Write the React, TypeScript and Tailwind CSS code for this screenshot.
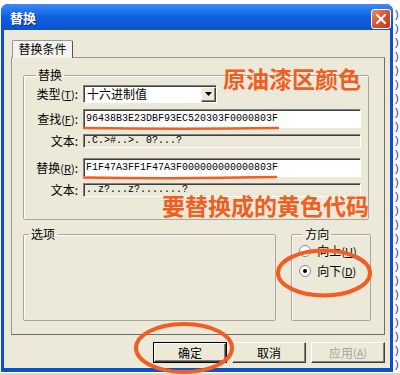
import React from 'react';

const cjk = "font-['Noto_Sans_CJK_SC','Noto_Sans',sans-serif]";
const mono = "font-['Liberation_Mono',monospace]";
const sunken =
  'border border-t-[#808080] border-l-[#808080] border-r-white border-b-white shadow-[inset_1px_1px_0_#404040]';
const raised =
  'border border-t-white border-l-white border-r-[#404040] border-b-[#404040] shadow-[inset_-1px_-1px_0_#808080]';

function Row({ label, children, className = '' }: { label: React.ReactNode; children: React.ReactNode; className?: string }) {
  return (
    <div className={`flex items-center ${className}`}>
      <div className="w-[52px] pr-[5px] flex justify-end text-[12px] leading-[14px] whitespace-nowrap">{label}</div>
      <div className="flex-1">{children}</div>
    </div>
  );
}

function Hot({ k }: { k: string }) {
  return (
    <span className="text-[11px]">
      (<span className="underline">{k}</span>)
    </span>
  );
}

function Radio({ checked, label, k }: { checked?: boolean; label: string; k: string }) {
  return (
    <div className="flex items-center gap-[6px]">
      <div className="w-[12px] h-[12px] rounded-full border border-[#8a8a8a] bg-white flex items-center justify-center">
        {checked && <div className="w-[4px] h-[4px] rounded-full bg-black" />}
      </div>
      <span className="text-[12px] leading-[14px]">
        {label}
        <Hot k={k} />
      </span>
    </div>
  );
}

export default function App() {
  return (
    <div className={`relative w-[400px] h-[375px] overflow-hidden bg-white text-black ${cjk}`}>
      {/* hex editor behind the dialog */}
      <div className="h-[4px] overflow-hidden">
        <div className={`-mt-[9px] ml-[2px] text-[11px] leading-[13px] whitespace-pre text-[#111] ${mono}`}>
          0000 0000 0000 0DBF 12BF 0000 0000 0018 0DBD 2DBD
        </div>
      </div>

      <div className="flex h-[368px]">
        {/* dialog */}
        <div className="ml-[1px] w-[392px] flex flex-col rounded-t-[7px] bg-[#0b4fd1]">
          <div className="h-[26px] flex items-center justify-between pl-[9px] pr-[2px] rounded-t-[7px] bg-gradient-to-b from-[#3b8cf5] via-[#0d5fe0] to-[#0a52d0]">
            <span className="text-white font-bold text-[13px] leading-none [text-shadow:1px_1px_0_#0a2a80]">替换</span>
            <div className="mt-[3px] w-[20px] h-[20px] rounded-[3px] border border-white bg-gradient-to-br from-[#e98a68] via-[#d9512a] to-[#c43d16] flex items-center justify-center">
              <svg width="12" height="12" viewBox="0 0 12 12">
                <path d="M2 2 L10 10 M10 2 L2 10" stroke="white" strokeWidth="2.2" strokeLinecap="round" />
              </svg>
            </div>
          </div>

          <div className="flex-1 mx-[3px] mb-[4px] bg-[#ece9d8] flex flex-col pt-[10px] pb-[5px]">
            {/* tab header */}
            <div className="h-[17px] flex">
              <div className="ml-[8px] w-[61px] h-[18px] border border-b-0 border-[#919b9c] border-r-[#55554f] bg-[#f4f3ee] rounded-t-[2px] text-[12px] leading-[16px] text-center z-10">
                替换条件
              </div>
            </div>
            {/* tab panel */}
            <div className="ml-[7px] mr-[5px] h-[278px] border border-[#919b9c] border-r-[#6f6e68] border-b-[#6f6e68] bg-[#ece9d8] pl-[11px] pr-[13px] pt-[10px]">
              <fieldset className="mr-[2px] border border-[#aca899] rounded-[2px] pl-[7px] pr-[7px] pb-[22px] shadow-[inset_1px_1px_0_white]">
                <legend className="ml-[5px] px-[2px] text-[12px] leading-[14px]">替换</legend>
                <Row label={<>类型<Hot k="T" />:</>} className="mt-[3px]">
                  <div className={`w-[134px] h-[18px] bg-white flex items-center justify-between ${sunken}`}>
                    <span className="pl-[3px] text-[12px] leading-[14px]">十六进制值</span>
                    <div className={`w-[15px] h-[15px] bg-[#ece9d8] flex items-center justify-center ${raised}`}>
                      <svg width="7" height="4" viewBox="0 0 7 4">
                        <path d="M0 0 H7 L3.5 4 Z" fill="black" />
                      </svg>
                    </div>
                  </div>
                </Row>
                <Row label={<>查找<Hot k="F" />:</>} className="mt-[6px]">
                  <div className={`h-[19px] bg-white flex items-center ${sunken}`}>
                    <span className={`pl-[2px] text-[10px] leading-none ${mono}`}>96438B3E23DBF93EC520303F0000803F</span>
                  </div>
                </Row>
                <Row label="文本:" className="mt-[6px]">
                  <div className={`h-[14px] bg-[#ece9d8] flex items-center ${sunken}`}>
                    <span className={`pl-[2px] text-[10px] leading-none whitespace-pre ${mono}`}>.C.&gt;#..&gt;. 0?...?</span>
                  </div>
                </Row>
                <Row label={<>替换<Hot k="R" />:</>} className="mt-[10px]">
                  <div className={`h-[19px] bg-white flex items-center ${sunken}`}>
                    <span className={`pl-[2px] text-[10px] leading-none ${mono}`}>F1F47A3FF1F47A3F000000000000803F</span>
                  </div>
                </Row>
                <Row label="文本:" className="mt-[6px]">
                  <div className={`h-[14px] bg-[#ece9d8] flex items-center ${sunken}`}>
                    <span className={`pl-[2px] text-[10px] leading-none whitespace-pre ${mono}`}>..z?...z?.......?</span>
                  </div>
                </Row>
              </fieldset>

              <div className="mt-[7px] flex gap-[15px]">
                <fieldset className="w-[254px] h-[94px] border border-[#aca899] rounded-[2px] shadow-[inset_1px_1px_0_white]">
                  <legend className="ml-[5px] px-[2px] text-[12px] leading-[14px]">选项</legend>
                </fieldset>
                <fieldset className="w-[80px] h-[94px] border border-[#aca899] rounded-[2px] shadow-[inset_1px_1px_0_white] pl-[7px] pt-[3px] flex flex-col gap-[6px]">
                  <legend className="ml-[4px] px-[2px] text-[12px] leading-[14px]">方向</legend>
                  <Radio label="向上" k="U" />
                  <Radio label="向下" k="D" checked />
                </fieldset>
              </div>
            </div>

            {/* buttons */}
            <div className="mt-[7px] mr-[5px] flex justify-end gap-[5px]">
              <div className="w-[74px] h-[21px] border border-black bg-[#ece9d8]">
                <div className={`h-full flex items-center justify-center text-[12px] ${raised}`}>确定</div>
              </div>
              <div className={`w-[74px] h-[21px] bg-[#ece9d8] flex items-center justify-center text-[12px] ${raised}`}>取消</div>
              <div className={`w-[74px] h-[21px] bg-[#ece9d8] flex items-center justify-center text-[12px] text-[#a7a69c] ${raised}`}>
                应用<Hot k="A" />
              </div>
            </div>
          </div>
        </div>

        {/* right edge of the window behind */}
        <div className={`flex-1 flex flex-col items-center pt-[4px] text-[11px] leading-[14px] text-[#1a3cbf] ${mono}`}>
          {Array.from({ length: 26 }).map((_, i) => (
            <span key={i}>)</span>
          ))}
        </div>
      </div>

      <div className="h-[3px] bg-[#dcd9cc] border-t border-white" />

      {/* orange annotations drawn over the screenshot */}
      <svg className="absolute inset-0 pointer-events-none" width="400" height="375">
        <path d="M84 128 Q180 129.5 278 128" stroke="#f25d22" strokeWidth="2.5" fill="none" strokeLinecap="round" />
        <path d="M84 177.5 Q180 179 276 177" stroke="#f25d22" strokeWidth="2.5" fill="none" strokeLinecap="round" />
        <ellipse cx="324" cy="273" rx="46" ry="22.5" stroke="#f25d22" strokeWidth="4" fill="none" />
        <ellipse cx="184" cy="348" rx="48" ry="24" stroke="#f25d22" strokeWidth="4" fill="none" />
      </svg>
      <span className="absolute left-[223px] top-[67px] text-[23px] leading-none font-bold text-[#f25d22]">原油漆区颜色</span>
      <span className="absolute left-[162px] top-[194px] text-[23px] leading-none font-bold text-[#f25d22]">要替换成的黄色代码</span>
    </div>
  );
}
